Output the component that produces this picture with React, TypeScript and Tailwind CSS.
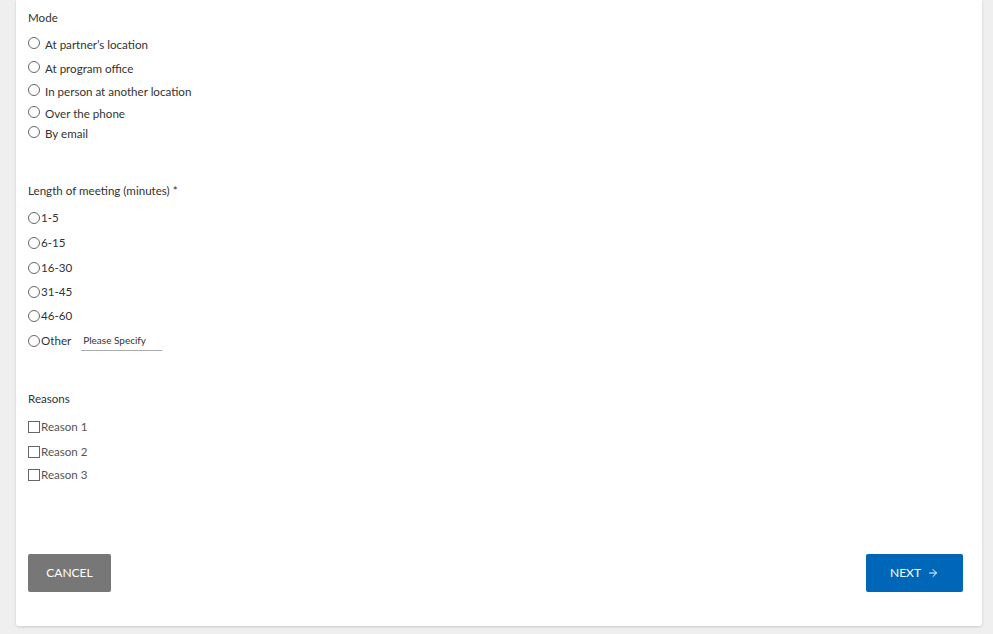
import React from "react";
import { ArrowRight } from "lucide-react";

const modes: { label: string; h: string }[] = [
  { label: "At partner’s location", h: "h-[24px]" },
  { label: "At program office", h: "h-[23px]" },
  { label: "In person at another location", h: "h-[22px]" },
  { label: "Over the phone", h: "h-[20px]" },
  { label: "By email", h: "h-[24px]" },
];

const lengths: { label: string; h: string }[] = [
  { label: "1-5", h: "h-[25px]" },
  { label: "6-15", h: "h-[25px]" },
  { label: "16-30", h: "h-[24px]" },
  { label: "31-45", h: "h-[24px]" },
  { label: "46-60", h: "h-[25px]" },
];

const reasons: { label: string; h: string }[] = [
  { label: "Reason 1", h: "h-[25px]" },
  { label: "Reason 2", h: "h-[23px]" },
  { label: "Reason 3", h: "h-[24px]" },
];

function Circle() {
  return <span className="inline-block w-[12px] h-[12px] rounded-full border border-[#666] bg-white shrink-0" />;
}

function Box() {
  return <span className="inline-block w-[12px] h-[12px] border border-[#666] bg-white shrink-0" />;
}

export default function App() {
  return (
    <div
      className="min-h-screen bg-[#efefef] px-[16px] pr-[11px] text-[11.6px] text-[#333]"
      style={{ fontFamily: "Lato, 'Open Sans', sans-serif" }}
    >
      <div className="bg-white rounded-b-[3px] shadow-[0_1px_3px_rgba(0,0,0,0.15)] pl-[12px] pr-[19px] pt-[10px] pb-[34px] flex flex-col">
        <div className="h-4 leading-4">Mode</div>
        <div className="mt-[7px] flex flex-col">
          {modes.map((m) => (
            <div key={m.label} className={`${m.h} flex items-start pt-[4px]`}>
              <span className="flex items-center gap-[5px] h-[12px]">
                <Circle />
                <span className="leading-4 mt-[4px]">{m.label}</span>
              </span>
            </div>
          ))}
        </div>

        <div className="mt-[37px] h-4 leading-4">Length of meeting (minutes) *</div>
        <div className="mt-[6px] flex flex-col">
          {lengths.map((l) => (
            <div key={l.label} className={`${l.h} flex items-start pt-[5px]`}>
              <span className="flex items-center gap-[1px]">
                <Circle />
                <span className="leading-4">{l.label}</span>
              </span>
            </div>
          ))}
          <div className="h-[24px] flex items-start pt-[5px]">
            <span className="flex items-center gap-[1px]">
              <Circle />
              <span className="leading-4">Other</span>
            </span>
            <input
              className="ml-[10px] w-[81px] border-b border-[#aaa] text-[10px] px-[2px] pb-[2px] outline-none placeholder:text-[#333]"
              placeholder="Please Specify"
            />
          </div>
        </div>

        <div className="mt-[39px] h-4 leading-4">Reasons</div>
        <div className="mt-[7px] flex flex-col">
          {reasons.map((r) => (
            <div key={r.label} className={`${r.h} flex items-start pt-[5px]`}>
              <span className="flex items-center gap-[1px] text-[#555]">
                <Box />
                <span className="leading-4">{r.label}</span>
              </span>
            </div>
          ))}
        </div>

        <div className="mt-[68px] flex justify-between">
          <button className="h-[38px] w-[83px] bg-[#777] rounded-[2px] text-white text-[12px] uppercase">
            Cancel
          </button>
          <button className="h-[38px] w-[97px] bg-[#0067b8] rounded-[2px] text-white text-[12px] uppercase flex items-center justify-center gap-[6px]">
            Next <ArrowRight size={12} strokeWidth={2} />
          </button>
        </div>
      </div>
    </div>
  );
}
